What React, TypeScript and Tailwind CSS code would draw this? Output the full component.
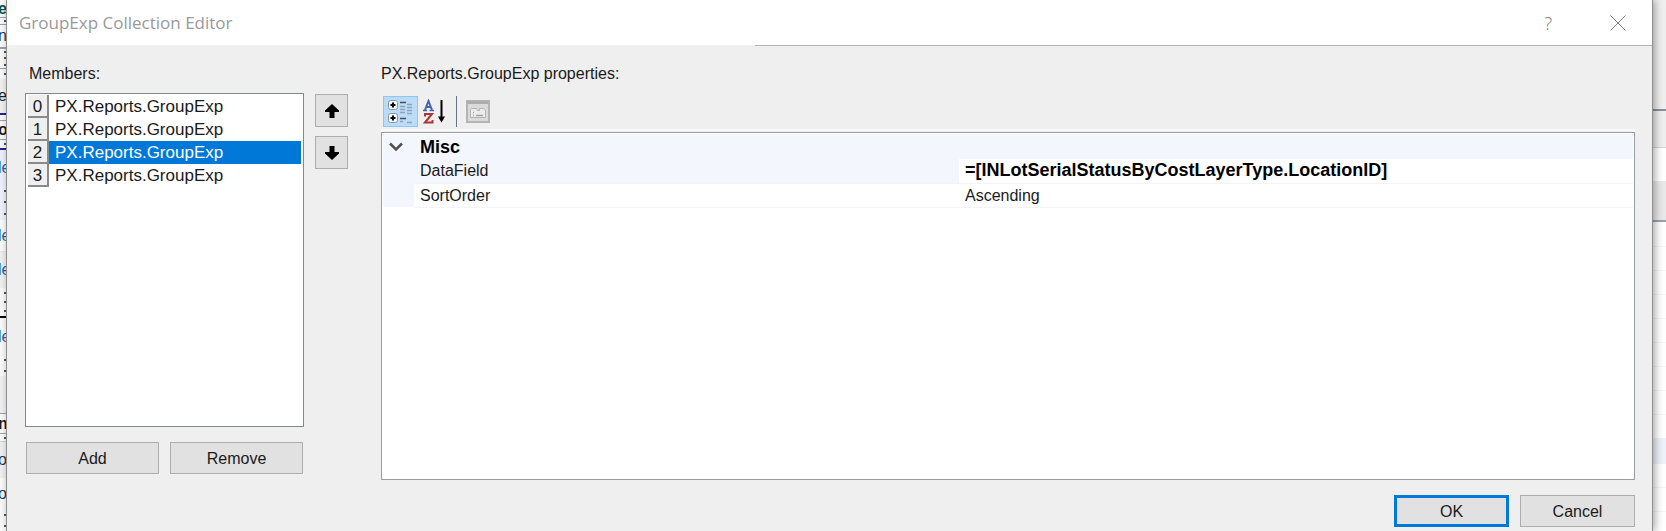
import { useState } from "react";
import clsx from "clsx";

interface Property {
    name: string;
    value: string;
    changed?: boolean;
}

interface StripRow {
    height: string;
    text?: string;
    dots?: number;
    className?: string;
}

const MEMBERS = ["PX.Reports.GroupExp", "PX.Reports.GroupExp", "PX.Reports.GroupExp", "PX.Reports.GroupExp"];

const PROPERTIES: Property[] = [
    { name: "DataField", value: "=[INLotSerialStatusByCostLayerType.LocationID]", changed: true },
    { name: "SortOrder", value: "Ascending" },
];

// the bit of the designer window that shows left of the dialog
const LEFT_STRIP: StripRow[] = [
    { height: "h-[18px]", text: "er", className: "border-b border-gray-400 font-bold text-teal-900" },
    { height: "h-[7px]", dots: 1, className: "border-b border-gray-400" },
    { height: "h-[24px]", text: "n", className: "border-b-2 border-gray-400 text-[#1f3a68]" },
    { height: "h-[20px]", dots: 3, className: "border-b border-gray-400" },
    { height: "h-[10px]", dots: 1 },
    { height: "h-[36px]", text: "ea", className: "border-b-2 border-[#23238e] bg-[#f0f0f0]" },
    { height: "h-[6px]", className: "border-b border-gray-400" },
    { height: "h-[19px]", text: "or", className: "border-b border-gray-400 font-bold" },
    { height: "h-[10px]", dots: 1, className: "border-b-2 border-[#23238e]" },
    { height: "h-[35px]", text: "le", className: "bg-[#f0f2fb] text-[#2f5f96]" },
    { height: "h-[35px]", dots: 3, className: "bg-[#f0f2fb]" },
    { height: "h-[32px]", text: "le", className: "border-b border-gray-200 text-[#2f5f96]" },
    { height: "h-[36px]", text: "le", className: "bg-[#f0f0f0] text-[#2f5f96]" },
    { height: "h-[30px]", dots: 3, className: "border-b-2 border-black" },
    { height: "h-[37px]", text: "le", className: "text-[#2f5f96]" },
    { height: "h-[21px]", dots: 2 },
    { height: "h-[38px]", className: "border-b border-gray-400 bg-[#f0f0f0]" },
    { height: "h-[20px]", text: "n", className: "border-b border-gray-400 font-bold" },
    { height: "h-[8px]", dots: 1, className: "border-b border-gray-300" },
    { height: "h-[36px]", text: "o", className: "bg-[#f0f0f0] text-[#1f3a68]" },
    { height: "h-[32px]", text: "o", className: "text-[#1f3a68]" },
    { height: "h-[21px]", dots: 2 },
];

const RIGHT_STRIP = [
    "h-[111px] bg-[#efefef] border-b-2 border-[#8a8f98]",
    "h-[37px] bg-[#efefef] border-b border-gray-300",
    "h-[33px] bg-white",
    "h-[41px] bg-[#e9e9e9] border-b-2 border-gray-400",
    "h-[25px] bg-white border-b border-gray-100",
    "h-[24px] bg-white border-b border-gray-100",
    "h-[24px] bg-white border-b border-gray-100",
    "h-[24px] bg-white border-b border-gray-100",
    "h-[24px] bg-white border-b border-gray-100",
    "h-[24px] bg-white border-b border-gray-100",
    "h-[24px] bg-white border-b border-gray-100",
    "h-[24px] bg-white border-b border-gray-100",
    "h-[23px] bg-white",
    "h-[26px] bg-[#eff1fa]",
    "h-[24px] bg-white border-b border-gray-100",
    "h-[24px] bg-white border-b border-gray-100",
    "h-[19px] bg-white",
];

function ArrowIcon({ down }: { down?: boolean }) {
    return (
        <svg width="14" height="14" viewBox="0 0 14 14" className={clsx(down && "rotate-180")} aria-hidden="true">
            <path d="M7 0 L14 6.5 V8 H9.500 V14 H4.500 V8 H0 V6.500 Z" fill="#000" />
        </svg>
    );
}

function CategorizedIcon() {
    return (
        <svg width="27" height="25" viewBox="0 0 27 25" aria-hidden="true">
            {[1, 14].map((y) => (
                <g key={y}>
                    <rect x="1.5" y={y + 0.5} width="9" height="9" rx="2" fill="#f4f8fc" stroke="#7f98b6" />
                    <path d={`M3.500 ${y + 5}h5M6 ${y + 2.5}v5`} stroke="#000" strokeWidth="2" />
                </g>
            ))}
            <path d="M13 3.500h6M13 19.500h6" stroke="#3f4f66" strokeWidth="1.500" />
            <path d="M13 7.500h5M13 10.500h5M13 13.500h5M20 5.500h5M20 8.500h5M20 11.500h5M20 14.500h5M13 22.500h3M20 23.500h5" stroke="#8fa3bf" strokeWidth="1.500" />
        </svg>
    );
}

function SortIcon() {
    return (
        <svg width="24" height="26" viewBox="0 0 24 26" aria-hidden="true">
            <path d="M0 11.500h4M6.500 11.500h4.500" stroke="#4263b4" strokeWidth="1.500" />
            <path d="M2 11 5.500 2 9 11M3.500 8h4.500" fill="none" stroke="#4263b4" strokeWidth="2" />
            <path d="M2 17.500V15h7L2 23.500h7.500v-2.500" fill="none" stroke="#a83838" strokeWidth="2" />
            <path d="M18.500 1v18" stroke="#000" strokeWidth="2" />
            <path d="M15 17.500h7l-3.500 6z" fill="#000" />
        </svg>
    );
}

function PagesIcon() {
    return (
        <svg width="24" height="23" viewBox="0 0 24 23" aria-hidden="true">
            <rect x="1" y="1" width="22" height="21" fill="#dadada" stroke="#b4b4b4" strokeWidth="2" />
            <path d="M1 2.500h22" stroke="#adadad" strokeWidth="3" />
            <path d="M4.500 17.500v-8l1-1h5l1 2h2v-2h4l2 2v7z" fill="#ececec" stroke="#b4b4b4" />
            <path d="M7 12.500h1M7 15.500h1M10 15.500h7" stroke="#a2a2a2" strokeWidth="1.500" />
        </svg>
    );
}

const buttonClass = "flex items-center justify-center border border-[#adadad] bg-[#e1e1e1]";

export default function App() {
    const [selected, setSelected] = useState(2);

    return (
        <div className="flex overflow-hidden bg-white font-['Liberation_Sans',Arial,sans-serif] text-base text-[#1a1a1a]">
            <div className="w-[6px] shrink-0 overflow-hidden bg-[#fafafa]" aria-hidden="true">
                {LEFT_STRIP.map((row, i) => (
                    <div key={i} className={clsx("flex items-center overflow-hidden leading-none", row.height, row.className)}>
                        {row.text && <span className="-ml-[2px]">{row.text}</span>}
                        {row.dots && (
                            <span className="ml-auto flex h-full flex-col justify-around">
                                {Array.from({ length: row.dots }, (_, d) => (
                                    <i key={d} className="block h-[2px] w-[2px] bg-gray-600" />
                                ))}
                            </span>
                        )}
                    </div>
                ))}
            </div>

            <div role="dialog" aria-labelledby="title" className="z-10 min-w-0 flex-1 border-x border-[#8f8f8f] bg-[#efefef] shadow-[2px_0_8px_rgba(0,0,0,0.35)]">
                <header className="flex h-[45px] items-center bg-white pl-3 pr-[26px] font-['Open_Sans','Noto_Sans',sans-serif]">
                    <h1 id="title" className="flex-1 text-[17px] text-[#999]">GroupExp Collection Editor</h1>
                    <button aria-label="Help" className="mr-[58px] text-lg font-light text-[#777]">?</button>
                    <button aria-label="Close">
                        <svg width="16" height="16" viewBox="0 0 16 16" aria-hidden="true">
                            <path d="M.5.5l15 15M15.500.5l-15 15" stroke="#808080" />
                        </svg>
                    </button>
                </header>
                <div className="ml-auto h-px w-[54.5%] bg-[#b4b4b4]" />

                <main className="flex pb-1 pl-[18px] pr-[17px] pt-4">
                    <section className="w-[279px] shrink-0">
                        <h2 id="members" className="h-[22px] pl-1 leading-6">Members:</h2>
                        <ul role="listbox" aria-labelledby="members" className="mt-[9px] h-[334px] border border-[#828790] bg-white py-px pl-px pr-[2px] text-[17px]">
                            {MEMBERS.map((member, i) => (
                                <li
                                    key={i}
                                    role="option"
                                    aria-selected={i === selected}
                                    onClick={() => setSelected(i)}
                                    className="flex h-[23px] pl-px"
                                >
                                    <span className="w-[21px] border-b-2 border-r-2 border-[#8a8a8a] bg-[#efefef] text-center leading-[23px]">{i}</span>
                                    <span className={clsx("flex-1 pl-[6px] leading-[23px]", i === selected && "bg-[#0078d7] text-white")}>
                                        {member}
                                    </span>
                                </li>
                            ))}
                        </ul>
                        <div className="mt-[15px] flex gap-[11px] px-px">
                            <button className={clsx(buttonClass, "h-8 flex-1 pt-px")}>Add</button>
                            <button className={clsx(buttonClass, "h-8 flex-1 pt-px")}>Remove</button>
                        </div>
                    </section>

                    <div className="ml-[11px] flex w-[33px] shrink-0 flex-col gap-[9px] pt-8">
                        <button aria-label="Move up" className={clsx(buttonClass, "h-[33px]")}>
                            <ArrowIcon />
                        </button>
                        <button aria-label="Move down" className={clsx(buttonClass, "h-[33px]")}>
                            <ArrowIcon down />
                        </button>
                    </div>

                    <section className="ml-[33px] min-w-0 flex-1">
                        <h2 className="h-[22px] leading-6">PX.Reports.GroupExp properties:</h2>
                        <div role="toolbar" className="mt-3 flex items-center border-b-2 border-[#f8f8f8] pb-[2px] pl-[2px]">
                            <button aria-label="Categorized" className="flex h-[31px] w-[35px] items-center justify-center border border-[#8fc6f3] bg-[#bcdcf6]">
                                <CategorizedIcon />
                            </button>
                            <button aria-label="Alphabetical" className="ml-[5px]">
                                <SortIcon />
                            </button>
                            <span className="ml-[9px] h-[31px] w-px bg-gray-500" />
                            <button aria-label="Property Pages" disabled className="ml-[9px]">
                                <PagesIcon />
                            </button>
                        </div>
                        <div className="mt-px h-[348px] border border-[#9a9ea5] bg-white p-px">
                            <table className="w-full table-fixed border-collapse text-left">
                                <colgroup>
                                    <col className="w-[31px]" />
                                    <col className="w-[43.6%]" />
                                    <col />
                                </colgroup>
                                <thead>
                                    <tr className="h-[25px] bg-[#f3f6fd] text-black">
                                        <td>
                                            <button aria-label="Collapse Misc" className="flex w-[26px] justify-center">
                                                <svg width="14" height="9" viewBox="0 0 14 9" aria-hidden="true">
                                                    <path d="M1 1.500l6 6 6-6" fill="none" stroke="#505050" strokeWidth="2.500" />
                                                </svg>
                                            </button>
                                        </td>
                                        <th colSpan={2} className="pl-[6px] text-lg leading-6">Misc</th>
                                    </tr>
                                </thead>
                                <tbody>
                                    {PROPERTIES.map((prop) => (
                                        <tr key={prop.name} className="h-6">
                                            <td className="bg-[#f3f6fd]" />
                                            <th
                                                scope="row"
                                                className={clsx("border-b border-[#f4f4f6] pl-[6px] font-normal leading-[23px]", prop.changed && "bg-[#f3f6fd]")}
                                            >
                                                {prop.name}
                                            </th>
                                            <td className={clsx("border-b border-[#f4f4f6] pl-[6px] leading-[23px]", prop.changed && "text-lg/[23px] font-bold text-black")}>
                                                {prop.value}
                                            </td>
                                        </tr>
                                    ))}
                                </tbody>
                            </table>
                        </div>
                        <div className="mt-[15px] flex justify-end gap-[11px]">
                            <button className="flex h-8 w-[115px] items-center justify-center border-[3px] border-[#0078d7] bg-[#e1e1e1] pt-px">OK</button>
                            <button className={clsx(buttonClass, "h-8 w-[115px] pt-px")}>Cancel</button>
                        </div>
                    </section>
                </main>
            </div>

            <div className="w-[13px] shrink-0" aria-hidden="true">
                {RIGHT_STRIP.map((row, i) => (
                    <div key={i} className={row} />
                ))}
            </div>
        </div>
    );
}
